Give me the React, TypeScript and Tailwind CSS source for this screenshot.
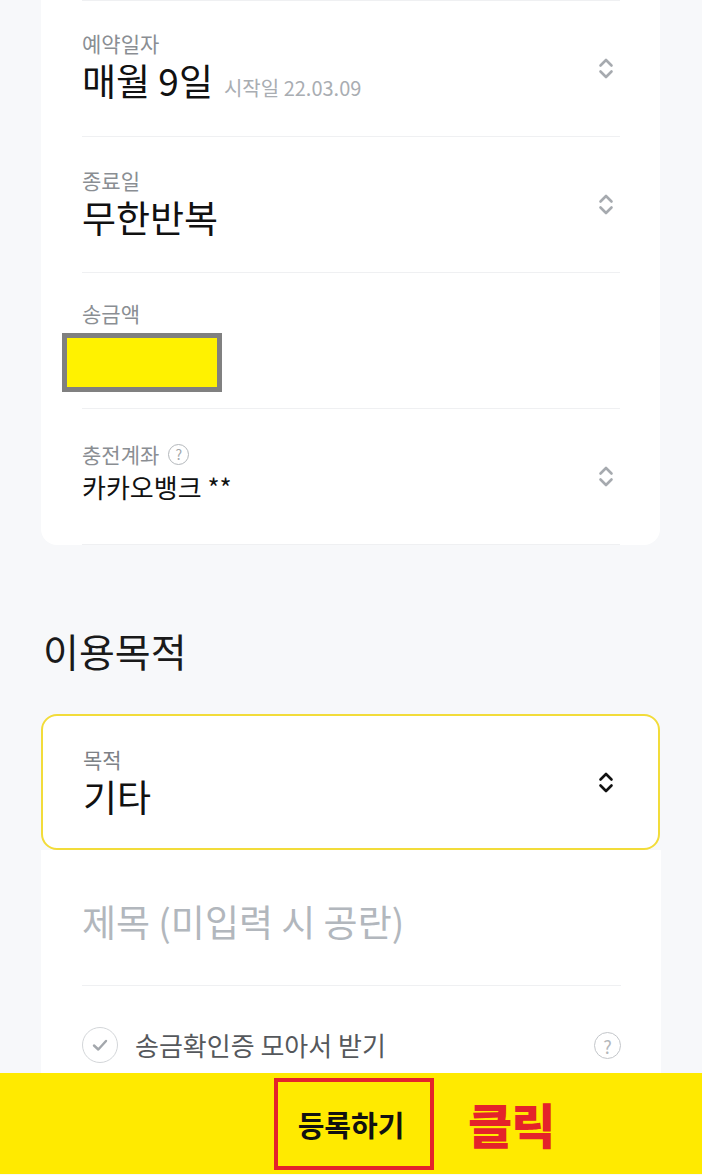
import React from "react";

const font = { fontFamily: '"Noto Sans CJK KR", "Noto Sans", sans-serif' };

function UpDown({ color }: { color: string }) {
  return (
    <svg width="16" height="23" viewBox="0 0 16 23" fill="none">
      <path d="M2.5 8.5 L8 3 L13.5 8.5" stroke={color} strokeWidth="2.6" strokeLinecap="round" strokeLinejoin="round" />
      <path d="M2.5 14.5 L8 20 L13.5 14.5" stroke={color} strokeWidth="2.6" strokeLinecap="round" strokeLinejoin="round" />
    </svg>
  );
}

function Row({ label, children, shift }: { label: React.ReactNode; children: React.ReactNode; shift?: string }) {
  return (
    <div className="flex h-[136px] items-center justify-between border-b border-[#eff0f2]">
      <div className={"flex flex-col " + (shift ?? "pb-[4px]")}>
        <div className="flex h-[24px] items-center text-[21px] leading-[24px] text-[#8a8e93]">{label}</div>
        <div className="mt-[3px]">{children}</div>
      </div>
      <div className="mr-[-1px] flex w-[30px] justify-center">
        <UpDown color="#a6aaaf" />
      </div>
    </div>
  );
}

export default function App() {
  return (
    <div className="h-[1175px] w-[702px] overflow-hidden bg-[#f7f8fa]" style={font}>
      {/* Top card */}
      <div className="ml-[41px] mr-[42px] rounded-b-[16px] bg-white pl-[41px] pr-[40px]">
        <div className="h-px bg-[#eff0f2]" />
        <Row label="예약일자">
          <div className="flex items-baseline">
            <span className="text-[37px] leading-[44px] text-[#111]">매월 9일</span>
            <span className="ml-[11px] text-[20px] text-[#a9adb2]">시작일 22.03.09</span>
          </div>
        </Row>
        <Row label="종료일" shift="pb-[2px]">
          <span className="text-[37px] leading-[44px] text-[#111]">무한반복</span>
        </Row>
        <div className="flex h-[136px] items-start border-b border-[#eff0f2] pt-[28px]">
          <div className="flex flex-col">
            <div className="h-[24px] text-[21px] leading-[24px] text-[#8a8e93]">송금액</div>
            <div className="ml-[-20px] mt-[8px] h-[59px] w-[160px] border-[5px] border-[#808080] bg-[#fff200]" />
          </div>
        </div>
        <Row
          shift="pb-[6px]"
          label={
            <>
              <span>충전계좌</span>
              <span className="ml-[9px] flex h-[21px] w-[21px] items-center justify-center rounded-full border-[1.5px] border-[#b3b7bb] text-[14px] leading-none text-[#a3a7ab]">
                ?
              </span>
            </>
          }
        >
          <span className="text-[26px] leading-[36px] text-[#111]">카카오뱅크 **</span>
        </Row>
      </div>

      {/* Heading */}
      <div className="ml-[43px] mt-[81px] text-[39px] leading-[48px] text-[#1a1a1a]">이용목적</div>

      {/* Purpose card */}
      <div className="ml-[41px] mr-[42px] mt-[40px] flex h-[136px] items-center justify-between rounded-[16px] border-2 border-[#f2dc3a] bg-white pl-[40px] pr-[37px]">
        <div className="flex flex-col">
          <div className="h-[24px] text-[21px] leading-[24px] text-[#7d8186]">목적</div>
          <div className="mt-[3px] text-[37px] leading-[44px] text-[#111]">기타</div>
        </div>
        <div className="flex w-[30px] justify-center">
          <UpDown color="#111111" />
        </div>
      </div>

      {/* Lower panel */}
      <div className="ml-[41px] mr-[41px] h-[223px] bg-white pl-[41px] pr-[40px]">
        <div className="flex h-[136px] items-center border-b border-[#eff0f2] pt-[6px]">
          <span className="text-[37px] leading-[44px] text-[#b2b7bd]">제목 (미입력 시 공란)</span>
        </div>
        <div className="flex items-start justify-between pt-[41px]">
          <div className="flex items-center">
            <div className="flex h-[36px] w-[36px] items-center justify-center rounded-full border-[1.5px] border-[#d3d6d9]">
              <svg width="20" height="20" viewBox="0 0 20 20" fill="none">
                <path d="M4 10.5 L8.3 14.5 L16 6" stroke="#a3a7ac" strokeWidth="2.4" strokeLinecap="round" strokeLinejoin="round" />
              </svg>
            </div>
            <span className="ml-[17px] text-[26px] leading-[36px] text-[#55585c]">송금확인증 모아서 받기</span>
          </div>
          <div className="mt-[5px] flex h-[27px] w-[27px] items-center justify-center rounded-full border-[1.5px] border-[#c3c6ca] text-[18px] leading-none text-[#b3b7bb]">
            ?
          </div>
        </div>
      </div>

      {/* Bottom bar */}
      <div className="flex h-[101px] items-start bg-[#ffea00] pl-[274px] pt-[5px]">
        <div className="flex h-[92px] w-[160px] items-center justify-center border-4 border-[#e4232a]">
          <span className="ml-[-6px] text-[29px] font-bold leading-none text-[#111]">등록하기</span>
        </div>
        <span className="ml-[34px] mt-[17px] text-[48px] font-black leading-[56px] tracking-[-1px] text-[#e4232a]">클릭</span>
      </div>
    </div>
  );
}
